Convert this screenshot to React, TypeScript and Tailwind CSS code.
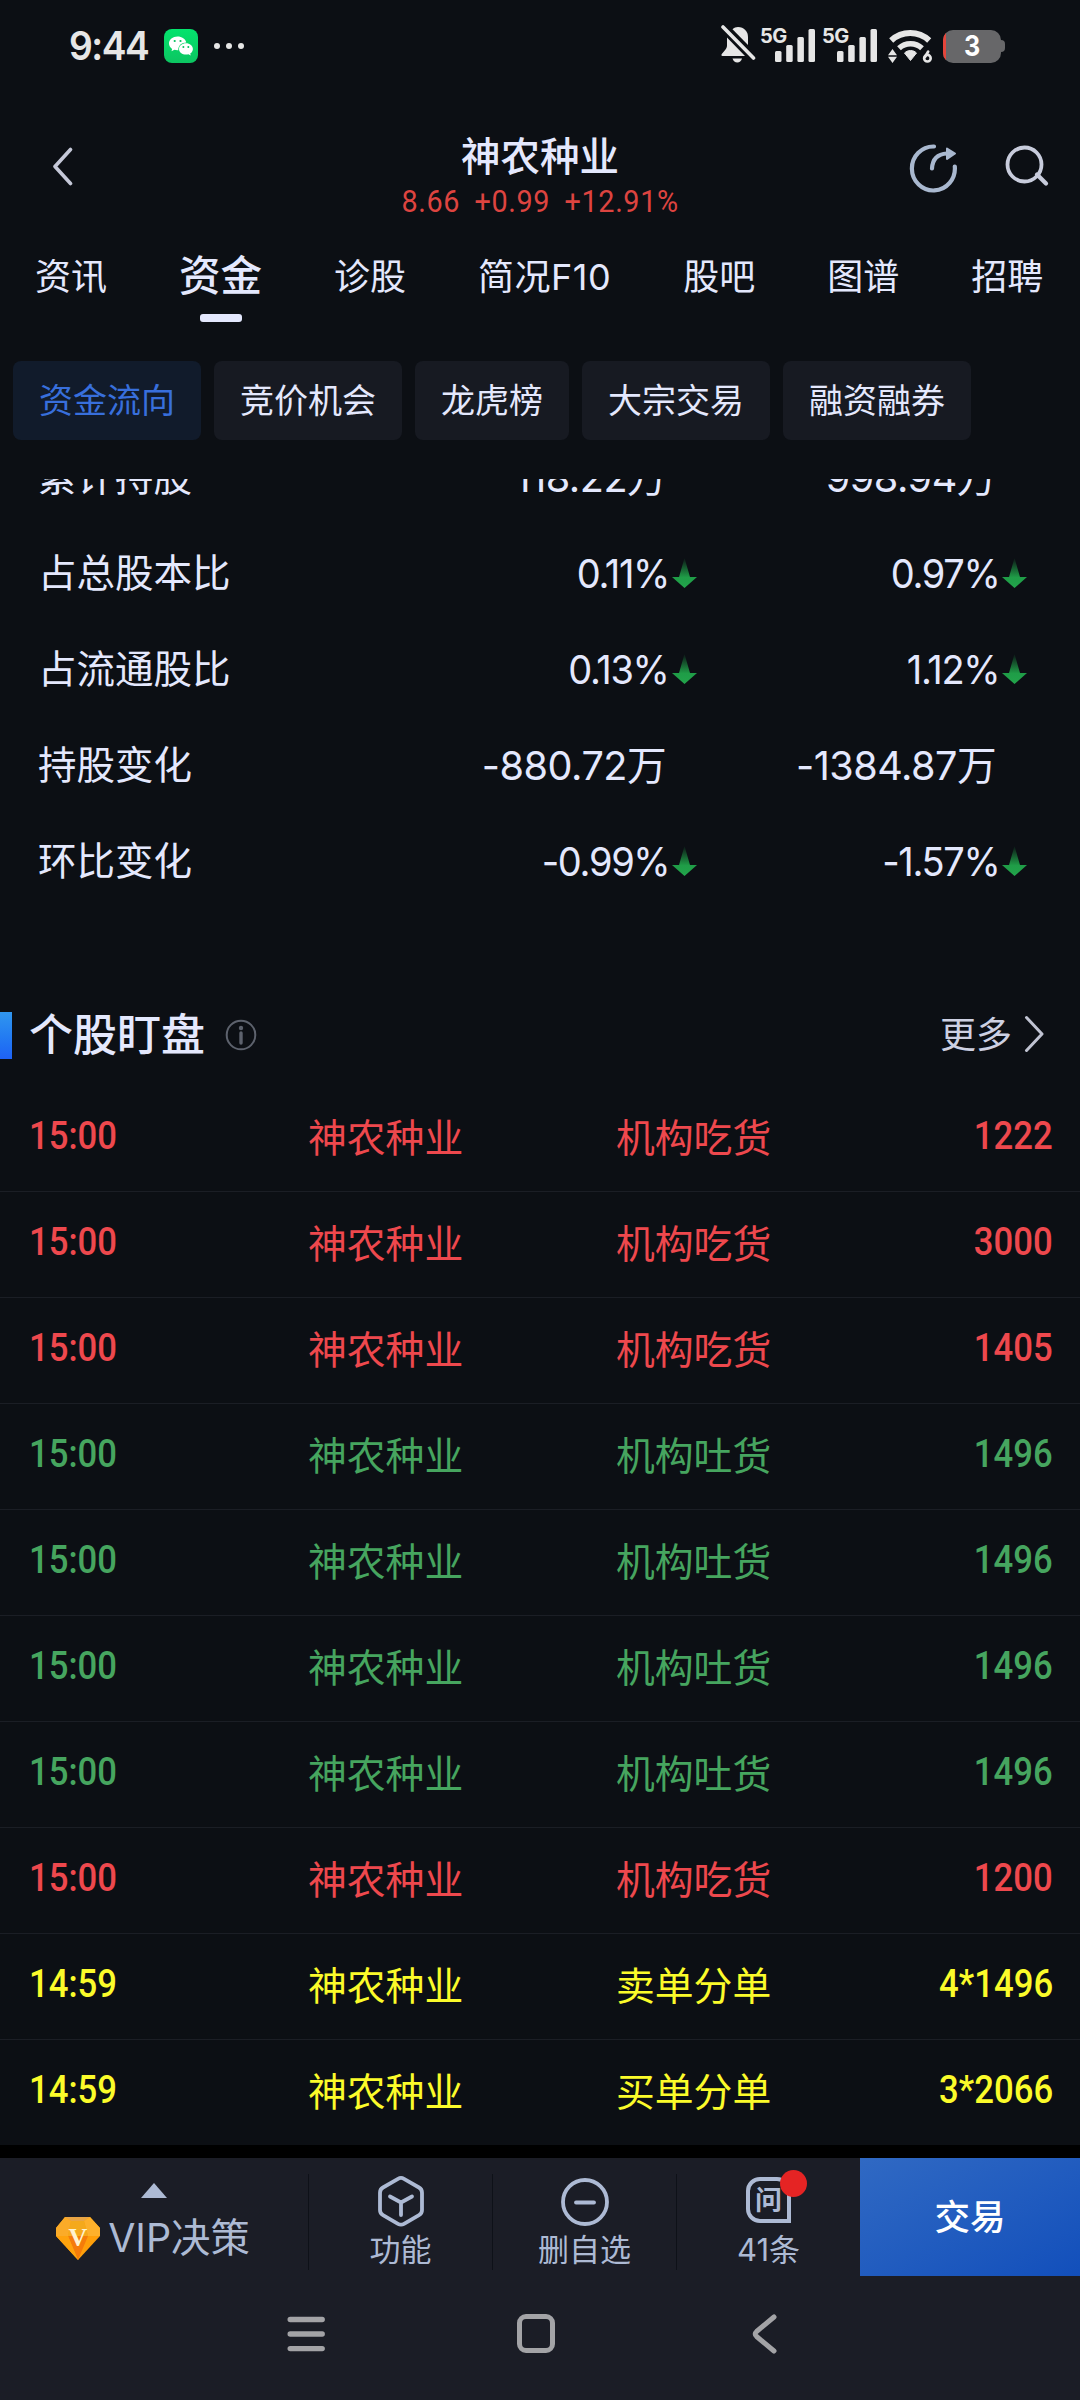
const tabs = ["资讯", "资金", "诊股", "简况F10", "股吧", "图谱", "招聘"];
const filters = ["资金流向", "竞价机会", "龙虎榜", "大宗交易", "融资融券"];

const holdings = [
  { label: "累计持股", current: "118.22万", previous: "998.94万", down: false },
  { label: "占总股本比", current: "0.11%", previous: "0.97%", down: true },
  { label: "占流通股比", current: "0.13%", previous: "1.12%", down: true },
  { label: "持股变化", current: "-880.72万", previous: "-1384.87万", down: false },
  { label: "环比变化", current: "-0.99%", previous: "-1.57%", down: true },
];

const tones = {
  buy: "text-[#ee484d]",
  sell: "text-[#46a55f]",
  split: "text-[#fbfb2a]",
};

const alerts: { time: string; action: string; volume: string; tone: keyof typeof tones }[] = [
  { time: "15:00", action: "机构吃货", volume: "1222", tone: "buy" },
  { time: "15:00", action: "机构吃货", volume: "3000", tone: "buy" },
  { time: "15:00", action: "机构吃货", volume: "1405", tone: "buy" },
  { time: "15:00", action: "机构吐货", volume: "1496", tone: "sell" },
  { time: "15:00", action: "机构吐货", volume: "1496", tone: "sell" },
  { time: "15:00", action: "机构吐货", volume: "1496", tone: "sell" },
  { time: "15:00", action: "机构吐货", volume: "1496", tone: "sell" },
  { time: "15:00", action: "机构吃货", volume: "1200", tone: "buy" },
  { time: "14:59", action: "卖单分单", volume: "4*1496", tone: "split" },
  { time: "14:59", action: "买单分单", volume: "3*2066", tone: "split" },
];

function Signal() {
  return (
    <div className="relative h-[36px] w-[54px]">
      <span className="absolute -left-px top-0 font-['Inter'] text-[20px] font-bold leading-[20px] tracking-[-0.5px]">
        5G
      </span>
      <svg className="absolute inset-0" width="54" height="36" fill="currentColor">
        <rect x="14" y="25" width="6.5" height="11" rx="1.5" />
        <rect x="25.2" y="19" width="6.5" height="17" rx="1.5" />
        <rect x="36.4" y="11" width="6.5" height="25" rx="1.5" />
        <rect x="47.5" y="3" width="6.5" height="33" rx="1.5" />
      </svg>
    </div>
  );
}

function StatusBar() {
  return (
    <div className="flex h-[92px] shrink-0 items-center pl-[69px] pr-[75px] text-[#e6e6e6]">
      <span className="w-[95px] origin-left scale-x-[0.93] font-['Inter'] text-[40px] font-semibold leading-none tracking-[-1.6px]">
        9:44
      </span>
      <svg width="34" height="34" viewBox="0 0 34 34">
        <defs>
          <linearGradient id="chat" x1="0" y1="0" x2="0" y2="1">
            <stop offset="0" stopColor="#04e36d" />
            <stop offset="1" stopColor="#0cc561" />
          </linearGradient>
        </defs>
        <rect width="34" height="34" rx="8" fill="url(#chat)" />
        <path d="M13.5 7.5c-4.7 0-8.500 3.100-8.500 7 0 2.200 1.200 4.100 3.100 5.400l-.6 2.300 2.900-1.400c1 .3 2 .4 3.100.4h.8c-.2-4.600 3.300-7.700 8-7.700-.8-3.500-4.400-6-8.800-6z" fill="#fff" />
        <path d="M22 14.300c-3.900 0-7 2.500-7 5.600s3.100 5.600 7 5.600c.8 0 1.600-.1 2.400-.3l2.400 1.200-.6-2c1.700-1 2.700-2.700 2.700-4.500 0-3.100-3.100-5.600-6.900-5.600z" fill="#fff" />
        <g fill="#07c160">
          <circle cx="10.7" cy="12" r="1.1" />
          <circle cx="16.5" cy="12" r="1.1" />
          <circle cx="19.4" cy="18" r="1" />
          <circle cx="24.3" cy="18" r="1" />
        </g>
      </svg>
      <div className="ml-[16px] flex gap-[6px]">
        <i className="size-[6px] rounded-full bg-current" />
        <i className="size-[6px] rounded-full bg-current" />
        <i className="size-[6px] rounded-full bg-current" />
      </div>

      <svg className="-mt-[4px] ml-auto" width="35" height="38" viewBox="0 0 35 38" fill="currentColor">
        <path d="M11.5 4.200C13 2.700 15 2 17 2c6 0 10 4.500 10 10v8z" />
        <path d="M6 12.500 24 31H1.500C.5 31 0 30 .8 29l3.700-4.500c1-1.200 1.500-2.500 1.500-4z" />
        <path d="M11.500 33.500h9.500c-.8 2.500-2.500 4-4.700 4s-4-1.500-4.800-4z" />
        <path d="M2 2 32.500 33" stroke="currentColor" strokeWidth="3.6" strokeLinecap="round" />
      </svg>
      <div className="-mt-[4px] ml-[5px] flex gap-[8px]">
        <Signal />
        <Signal />
      </div>
      <svg className="ml-[11px]" width="44" height="34" viewBox="0 0 44 34" fill="none">
        <path d="M3.200 11.500a28 28 0 0 1 38 0" stroke="currentColor" strokeWidth="6" />
        <path d="M11 19.300a17 17 0 0 1 23 0" stroke="currentColor" strokeWidth="5.5" />
        <path d="M16.500 24c3.300-3.300 8.900-3.300 12 0l-6 7.500z" fill="currentColor" stroke="currentColor" strokeWidth="1" strokeLinejoin="round" />
        <path d="M4.500 20 9 26.300H0zM4.500 34 9 27.800H0z" fill="currentColor" />
        <path d="M40.200 22.500 37 28" stroke="currentColor" strokeWidth="2.6" strokeLinecap="round" />
        <circle cx="39.4" cy="29.2" r="3.3" stroke="currentColor" strokeWidth="2.6" />
      </svg>
      <div className="relative ml-[11px] flex h-[33px] w-[58px] items-center justify-center overflow-hidden rounded-[10px] bg-[#676769]">
        <i className="absolute left-0 top-0 h-full w-[3px] bg-[#e5453b]" />
        <span className="scale-x-90 font-['Inter'] text-[28px] font-bold leading-none text-white">3</span>
      </div>
      <i className="h-[12px] w-[4px] rounded-r-[4px] bg-[#676769]" />
    </div>
  );
}

function Header() {
  return (
    <header className="flex h-[136px] shrink-0 items-start">
      <svg className="ml-[52px] mt-[55px]" width="22" height="39" viewBox="0 0 22 39" fill="none">
        <path d="M18.500 2.500 3 19.500l15.500 17" stroke="#c5c8d8" strokeWidth="3.6" strokeLinecap="round" strokeLinejoin="round" />
      </svg>
      <div className="ml-[210px] flex w-[512px] flex-col items-center">
        <h1 className="mt-[45px] text-[39.5px] font-medium leading-[40px]">神农种业</h1>
        <p className="mt-[7px] flex scale-x-[0.9] gap-[16px] whitespace-nowrap font-['Roboto'] text-[32px] leading-[34px] tracking-[0.7px] text-[#dd4440]">
          <span>8.66</span>
          <span>+0.99</span>
          <span>+12.91%</span>
        </p>
      </div>
      <svg className="ml-[112px] mt-[51px]" width="50" height="50" viewBox="0 0 50 50" fill="none">
        <path d="M26 3.500A21.500 22 0 1 0 46.800 23.500" stroke="#a9b8cf" strokeWidth="4.2" strokeLinecap="round" />
        <path d="M24 25.500C24.500 16 30 11 39 10.500" stroke="#a9b8cf" strokeWidth="4.2" strokeLinecap="round" />
        <path d="M39 5.500 47 10.500l-8 5.500z" fill="#a9b8cf" stroke="#a9b8cf" strokeWidth="2" strokeLinejoin="round" />
      </svg>
      <svg className="ml-[47px] mt-[53px]" width="45" height="43" viewBox="0 0 45 43" fill="none">
        <circle cx="19.5" cy="19.500" r="17" stroke="#c8ccdc" strokeWidth="3.8" />
        <path d="m32 29.500 9 9" stroke="#c8ccdc" strokeWidth="4.2" strokeLinecap="round" />
      </svg>
    </header>
  );
}

function DownArrow() {
  return (
    <svg width="25" height="30" viewBox="0 0 25 30">
      <defs>
        <linearGradient id="fall" x1="0" y1="0" x2="0" y2="1">
          <stop offset="0" stopColor="#1f9d47" stopOpacity="0.05" />
          <stop offset="0.65" stopColor="#1f9d47" />
          <stop offset="1" stopColor="#22a44b" />
        </linearGradient>
      </defs>
      <path d="M12.5 0 18 19h7L12.500 30 0 19h7z" fill="url(#fall)" />
    </svg>
  );
}

function HoldingValue({ value, down }: { value: string; down: boolean }) {
  return (
    <div className="flex items-center justify-end">
      <span
        className={`origin-right pt-px text-[40px] ${
          down ? "scale-x-[0.95] tracking-[-1.4px]" : "scale-x-[0.99] tracking-[-0.5px]"
        }`}
      >
        {value}
      </span>
      <span className={`flex w-[25px] ${down ? "ml-[3px]" : "ml-[6px]"}`}>{down && <DownArrow />}</span>
    </div>
  );
}

function Holdings() {
  return (
    <section className="mt-[39px] h-[430px] shrink-0 overflow-hidden">
      <div className="-mt-[50px]">
        {holdings.map((row) => (
          <div key={row.label} className="grid h-[96px] grid-cols-[659px_330px] items-center pl-[38px] leading-none">
            <div className="flex items-center justify-between">
              <span className="text-[38.5px]">{row.label}</span>
              <HoldingValue value={row.current} down={row.down} />
            </div>
            <HoldingValue value={row.previous} down={row.down} />
          </div>
        ))}
      </div>
    </section>
  );
}

function SectionHeader() {
  return (
    <div className="mt-[75px] flex h-[102px] shrink-0 items-center">
      <i className="h-[47px] w-[12px] bg-linear-to-b from-[#3196ee] to-[#1f61f5]" />
      <h2 className="ml-[17px] text-[44px] font-medium leading-none">个股盯盘</h2>
      <svg className="ml-[20px]" width="32" height="32" viewBox="0 0 32 32" fill="none">
        <circle cx="16" cy="16" r="14.3" stroke="#5d626d" strokeWidth="2" />
        <circle cx="16" cy="9" r="2.2" fill="#5d626d" />
        <path d="M16 14v10" stroke="#5d626d" strokeWidth="3.4" strokeLinecap="round" />
      </svg>
      <span className="ml-auto text-[36px] leading-none text-[#cdd0e2]">更多</span>
      <svg className="-mt-[3px] ml-[12px] mr-[35px]" width="21" height="38" viewBox="0 0 21 38" fill="none">
        <path d="M2.500 2.500 18 19 2.500 35.500" stroke="#c0c3d2" strokeWidth="3" strokeLinecap="round" strokeLinejoin="round" />
      </svg>
    </div>
  );
}

function Alerts() {
  return (
    <section className="h-[1059px] shrink-0 overflow-hidden">
      {alerts.map((alert, i) => (
        <div
          key={i}
          className={`flex h-[106px] items-center border-b border-[#1b1e25] leading-none ${tones[alert.tone]}`}
        >
          <span className="-mt-[5px] ml-[29px] w-[279px] origin-left scale-x-[0.89] font-['Roboto'] text-[39px] font-medium">
            {alert.time}
          </span>
          <span className="-mt-px w-[308px] text-[38.8px]">神农种业</span>
          <span className="-mt-px w-[200px] text-[38.8px]">{alert.action}</span>
          <span className="-mt-[5px] ml-auto mr-[27px] origin-right scale-x-[0.89] font-['Roboto'] text-[39px] font-medium">
            {alert.volume}
          </span>
        </div>
      ))}
    </section>
  );
}

function FooterBar() {
  return (
    <footer className="flex h-[118px] shrink-0 text-[#adbad4]">
      <div className="flex w-[308px] flex-col items-center">
        <svg className="mt-[25px]" width="26" height="15" viewBox="0 0 26 15">
          <path d="M13 0 26 15H0z" fill="#adbad4" />
        </svg>
        <div className="mt-[19px] flex items-center pr-[2px]">
          <svg width="44" height="43" viewBox="0 0 44 43">
            <path d="M9 0h25l10 11v8L22 43 0 19v-8z" fill="#ff9f0a" />
            <path d="M9 0h25l-6 4H15z" fill="#e9a545" />
            <path d="M0 11 9 0l6 4-3 15H0z" fill="#fbab28" />
            <path d="M44 11 34 0l-6 4 4 15h12z" fill="#fdb02b" />
            <path d="M15 4h13l4 15H12z" fill="#f4a91c" />
            <path d="M12 19h20L22 43z" fill="#f57c0a" />
            <path d="M0 19h12l10 24z" fill="#ffa30d" />
            <text x="22" y="29" textAnchor="middle" fontFamily="Liberation Serif, serif" fontWeight="700" fontSize="26" fill="#fff3cf">
              V
            </text>
          </svg>
          <span className="ml-[8px] text-[39.4px] leading-none">VIP决策</span>
        </div>
      </div>
      <i className="mt-[16px] h-[96px] w-px bg-[#0e1118]" />
      <div className="flex w-[183px] flex-col items-center">
        <svg className="mt-[18px]" width="46" height="52" viewBox="0 0 46 52" fill="none" stroke="currentColor" strokeWidth="3.8" strokeLinecap="round" strokeLinejoin="round">
          <path d="M20 2.800q3-1.700 6 0l15 8.700q3 1.700 3 5.200v17.200q0 3.500-3 5.200l-15 8.700q-3 1.700-6 0L5 39.100q-3-1.700-3-5.200V16.700q0-3.500 3-5.200z" />
          <path d="M12 20.500 23 26.500l11-6M23 26.500v12.500" />
        </svg>
        <span className="mt-[6px] text-[31px] leading-none">功能</span>
      </div>
      <i className="mt-[16px] h-[96px] w-px bg-[#0e1118]" />
      <div className="flex w-[183px] flex-col items-center">
        <svg className="mt-[19px]" width="50" height="50" viewBox="0 0 50 50" fill="none" stroke="currentColor" strokeWidth="3.8" strokeLinecap="round">
          <circle cx="25" cy="25" r="22" />
          <path d="M16 25.500h18" />
        </svg>
        <span className="mt-[7px] text-[31px] leading-none">删自选</span>
      </div>
      <i className="mt-[16px] h-[96px] w-px bg-[#0e1118]" />
      <div className="flex w-[183px] flex-col items-center">
        <div className="relative mt-[19px] flex h-[46px] w-[45px] items-center justify-center rounded-l-[14px] rounded-tr-[14px] border-4 border-current">
          <span className="text-[27px] font-bold leading-none">问</span>
          <i className="absolute -right-[20px] -top-[11px] size-[27px] rounded-full bg-[#e52424]" />
        </div>
        <span className="mt-[11px] text-[31px] leading-none">41条</span>
      </div>
      <button className="flex flex-1 items-center justify-center bg-linear-to-br from-[#3069c3] to-[#124fbb] pt-[2px] text-[35.5px] font-medium leading-none text-white">
        交易
      </button>
    </footer>
  );
}

function SystemNav() {
  return (
    <div className="flex h-[124px] shrink-0 items-start pl-[287px] pt-[37px] text-[#a3a3a6]">
      <svg width="38" height="42" viewBox="0 0 38 42" stroke="currentColor" strokeWidth="5.4" strokeLinecap="round">
        <path d="M3.200 6.500h32M3.200 21h32M3.200 35.600h32" />
      </svg>
      <i className="ml-[192px] mt-px h-[39px] w-[38px] rounded-[9px] border-[5px] border-current" />
      <svg className="ml-[197px]" width="26" height="42" viewBox="0 0 26 42" fill="none" stroke="currentColor" strokeWidth="5" strokeLinecap="round">
        <path d="M22 4 4.600 18.500q-2.800 2.500 0 5L22 38" />
      </svg>
    </div>
  );
}

export default function App() {
  return (
    <div className="flex h-[2400px] w-[1080px] flex-col overflow-hidden bg-[#0c0f14] font-['Inter','Noto_Sans_CJK_SC',sans-serif] text-[#e4e8fd]">
      <StatusBar />
      <Header />

      <nav className="flex h-[96px] shrink-0 items-center gap-[72px] whitespace-nowrap px-[35px] text-[36px] leading-none">
        {tabs.map((tab) =>
          tab === "资金" ? (
            <span key={tab} className="relative flex h-full items-center pt-px text-[41.5px] font-medium">
              {tab}
              <i className="absolute bottom-[2px] left-[21px] h-[8px] w-[42px] rounded-[3px] bg-[#e4e8fd]" />
            </span>
          ) : (
            <span key={tab} className={`pt-px ${tab === "简况F10" ? "tracking-[0.5px]" : ""}`}>
              {tab}
            </span>
          )
        )}
      </nav>

      <div className="mt-[37px] flex h-[79px] shrink-0 gap-[13px] pl-[13px] text-[34px] leading-none">
        {filters.map((filter, i) => (
          <button
            key={filter}
            className={`flex items-center rounded-[8px] px-[26px] ${
              i === 0 ? "bg-[#111b2b] text-[#386fdc]" : "bg-[#171a22]"
            }`}
          >
            {filter}
          </button>
        ))}
      </div>

      <Holdings />
      <SectionHeader />
      <Alerts />

      <div className="h-[13px] shrink-0 bg-black" />
      <div className="flex flex-col bg-[#1b1d26]">
        <FooterBar />
        <SystemNav />
      </div>
    </div>
  );
}
